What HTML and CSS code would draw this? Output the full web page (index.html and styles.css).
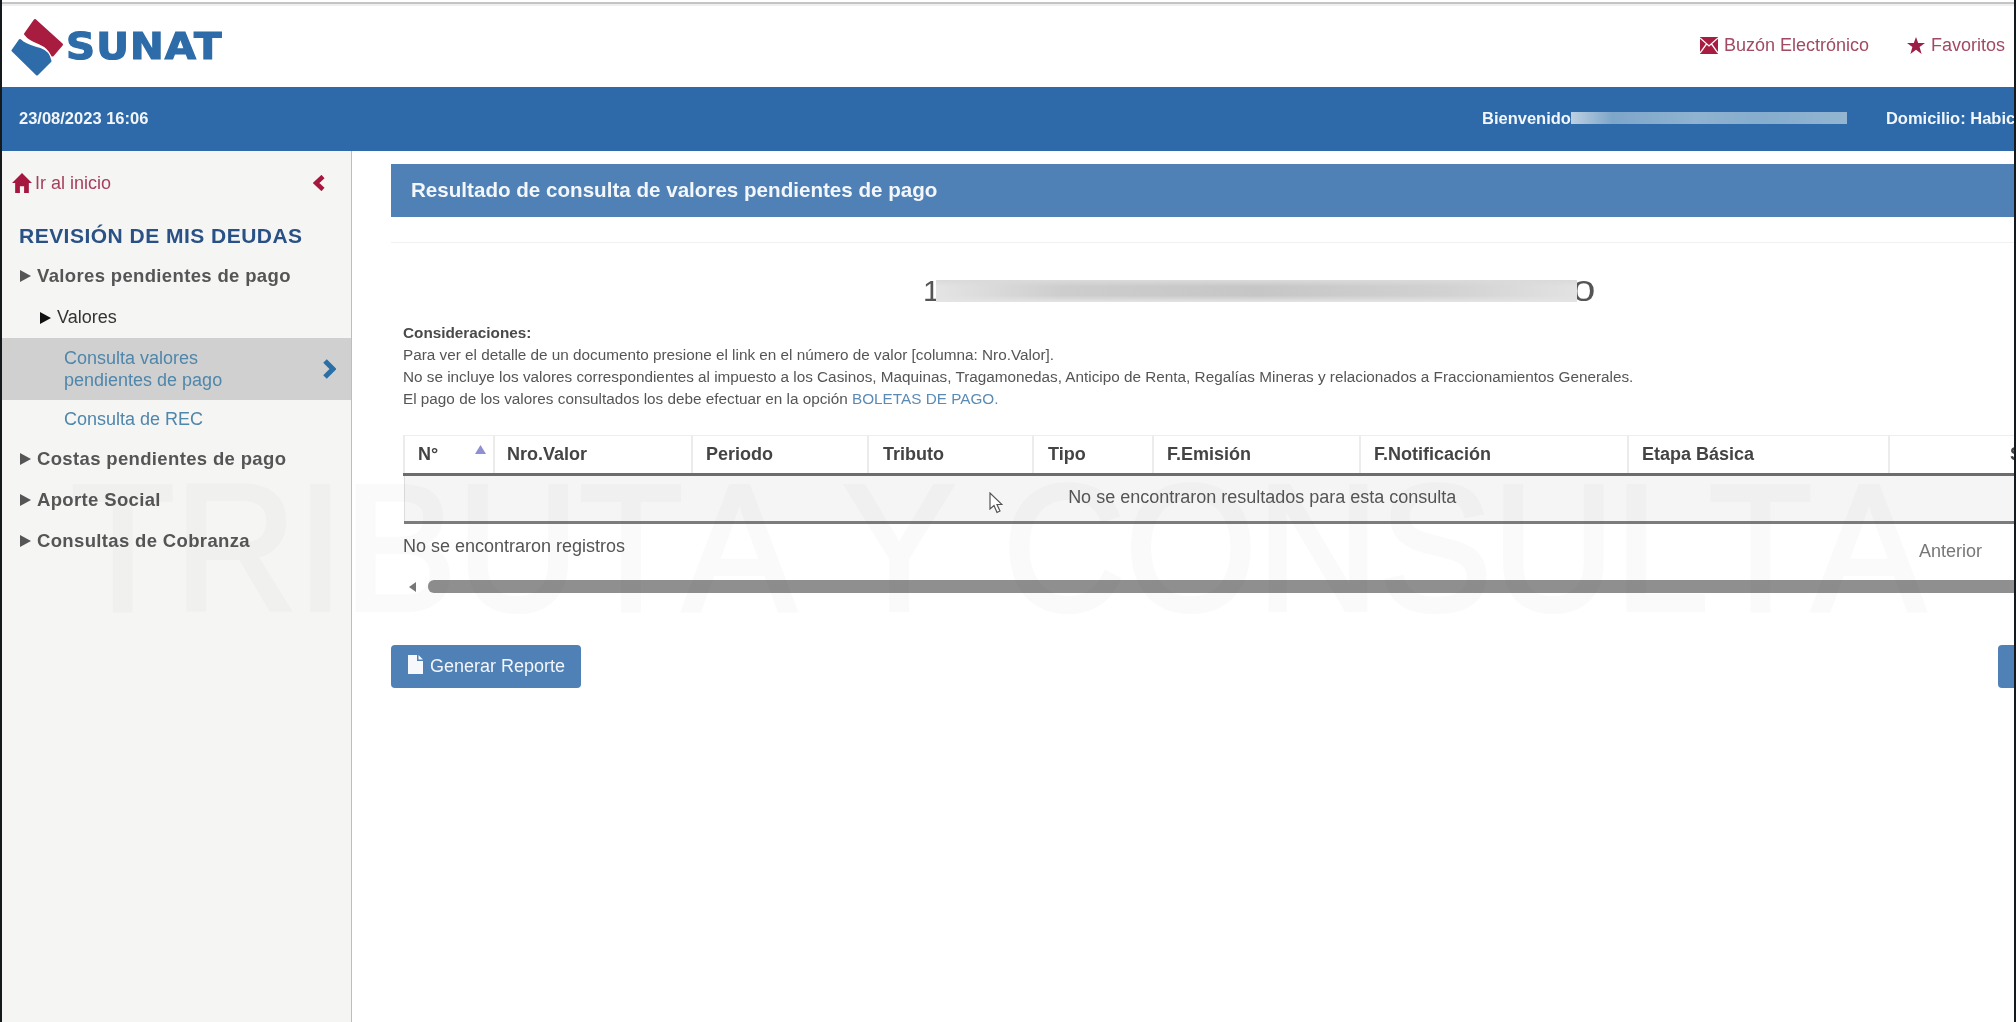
FILE: index.html
```html
<!DOCTYPE html>
<html lang="es">
<head>
<meta charset="utf-8">
<title>SUNAT</title>
<link rel="stylesheet" href="styles.css">
</head>
<body>
<div class="page">
  <div class="topstrip"></div>
  <header class="header">
    <div class="logo">
      <svg class="logo-mark" viewBox="11 17 53 58" width="53" height="58">
        <path class="logo-red" d="M35 19.500L61.500 43.500L52.500 54C50 48 47 45 40 42C34 40 29 38 25.500 33Z"/>
        <path class="logo-blue" d="M20 39.500C25 45 32 46 40 48.500C46 50.500 49 55 50 60L37 73L13 49.500Z"/>
      </svg>
      <span class="logo-text">SUNAT</span>
    </div>
    <nav class="toplinks">
      <a class="toplink">
        <svg class="ico-mail" viewBox="0 0 18 17" width="18" height="17"><path d="M0 0H18V17H0Z"/><path class="ico-cut" d="M0 1L9 9L18 1M0 16L6.500 7M18 16L11.500 7"/></svg>
        Buzón Electrónico
      </a>
      <a class="toplink">
        <svg class="ico-star" viewBox="0 0 18 17" width="18" height="17"><path d="M9 0L11.200 6H18L12.600 9.900L14.600 17L9 12.800L3.400 17L5.400 9.900L0 6H6.800Z"/></svg>
        Favoritos
      </a>
    </nav>
  </header>
  <div class="bluebar">
    <span class="datetime">23/08/2023 16:06</span>
    <div class="userinfo">
      <span>Bienvenido</span><span class="blur-name"></span>
      <span class="domicilio">Domicilio: Habic</span>
    </div>
  </div>
  <div class="body-row">
    <aside class="sidebar">
      <div class="side-top">
        <a class="home">
          <svg class="ico-red" viewBox="0 0 19 19" width="20" height="20"><path d="M9.500 0L19 9.500H16V19H11.500V12.500H7.500V19H3V9.500H0Z"/></svg>
          Ir al inicio
        </a>
        <svg class="chev-red" viewBox="0 0 12 16" width="12" height="16"><path d="M10 1.500L3 8L10 14.500"/></svg>
      </div>
      <h2 class="side-title">REVISIÓN DE MIS DEUDAS</h2>
      <ul class="menu">
        <li class="menu-main"><i class="tri"></i>Valores pendientes de pago</li>
        <li class="menu-sub"><i class="tri tri-dark"></i>Valores</li>
        <li class="menu-link active">
          <span>Consulta valores<br>pendientes de pago</span>
          <svg class="chev-blue" viewBox="0 0 14 20" width="14" height="20"><path d="M3 2L11 10L3 18"/></svg>
        </li>
        <li class="menu-link short"><span>Consulta de REC</span></li>
        <li class="menu-main first-after"><i class="tri"></i>Costas pendientes de pago</li>
        <li class="menu-main"><i class="tri"></i>Aporte Social</li>
        <li class="menu-main"><i class="tri"></i>Consultas de Cobranza</li>
      </ul>
    </aside>
    <main class="main">
      <h1 class="title-bar">Resultado de consulta de valores pendientes de pago</h1>
      <div class="rule"></div>
      <div class="ruc">
        <span>1</span><span class="ruc-blur"></span><span class="ruc-end">0</span>
      </div>
      <div class="notes">
        <strong>Consideraciones:</strong><br>
        Para ver el detalle de un documento presione el link en el número de valor [columna: Nro.Valor].<br>
        No se incluye los valores correspondientes al impuesto a los Casinos, Maquinas, Tragamonedas, Anticipo de Renta, Regalías Mineras y relacionados a Fraccionamientos Generales.<br>
        El pago de los valores consultados los debe efectuar en la opción <a class="note-link">BOLETAS DE PAGO.</a>
      </div>
      <div class="dt">
        <table class="grid">
          <thead>
            <tr>
              <th class="c1">N°<svg class="sort" viewBox="0 0 11 9" width="11" height="9"><path d="M5.500 0L11 9H0Z"/></svg></th>
              <th class="c2">Nro.Valor</th>
              <th class="c3">Periodo</th>
              <th class="c4">Tributo</th>
              <th class="c5">Tipo</th>
              <th class="c6">F.Emisión</th>
              <th class="c7">F.Notificación</th>
              <th class="c8">Etapa Básica</th>
              <th class="c9">Saldo</th>
            </tr>
          </thead>
          <tbody>
            <tr><td colspan="9">No se encontraron resultados para esta consulta</td></tr>
          </tbody>
        </table>
        <div class="pager">
          <span>No se encontraron registros</span>
          <span class="anterior">Anterior</span>
        </div>
        <div class="scrollbar">
          <i class="scroll-arrow"></i>
          <div class="scroll-thumb"></div>
        </div>
      </div>
      <div class="actions">
        <button class="btn">
          <svg class="ico-file" viewBox="0 0 15 19" width="15" height="19"><path d="M0 0H9V6H15V19H0ZM10.500 0L15 4.500H10.500Z"/></svg>
          Generar Reporte
        </button>
        <button class="btn btn-next">Regresar</button>
      </div>
    </main>
  </div>
  <div class="watermark">TRIBUTA Y CONSULTA</div>
  <svg class="cursor" viewBox="0 0 14 22" width="14" height="22"><path d="M1 1V17L5 13.500L8 20.500L11 19L8 12.500H13Z"/></svg>
</div>
</body>
</html>
```
FILE: styles.css
```css
* { box-sizing: border-box; }
html, body { margin: 0; height: 100%; overflow: hidden; background: #fff; }
body { font-family: "Liberation Sans", Arial, sans-serif; color: #555; }

.page {
  position: relative;
  width: 2016px;
  height: 1022px;
  display: flex;
  flex-direction: column;
  overflow: hidden;
  border-left: 2px solid #14191c;
  border-right: 2px solid #14191c;
  filter: blur(0.45px);
}

.topstrip { height: 6px; flex: none; background: linear-gradient(#fff 0 2px, #c4c4c4 2px 4px, #efefef 4px); }

.header {
  height: 81px;
  flex: none;
  display: flex;
  justify-content: space-between;
  align-items: center;
  padding: 0 9px 0 9px;
}
.logo { display: flex; align-items: center; }
.logo-mark { display: block; margin-top: 1px; }
.logo-red { fill: #a81c40; stroke: #a81c40; stroke-width: 3; stroke-linejoin: round; }
.logo-blue { fill: #2d6ca8; stroke: #2d6ca8; stroke-width: 3; stroke-linejoin: round; }
.logo-text {
  display: inline-block;
  font-family: "DejaVu Sans", sans-serif;
  font-weight: 700;
  font-size: 37px;
  line-height: 1;
  letter-spacing: 1px;
  color: #2d6ca8;
  margin-left: 2px;
  -webkit-text-stroke: 1.200px #2d6ca8;
  transform: scaleX(1.09);
  transform-origin: left center;
}
.toplinks { display: flex; gap: 38px; margin-top: -3px; }
.toplink { display: flex; align-items: center; gap: 6px; font-size: 18px; color: #a24a63; white-space: nowrap; }
.ico-mail path { fill: #a81c40; }
.ico-mail .ico-cut { fill: none; stroke: #fff; stroke-width: 1.300; }
.ico-star path { fill: #9d1f45; }

.bluebar {
  height: 64px;
  flex: none;
  background: #2e6aa9;
  color: #f2f6fa;
  display: flex;
  align-items: center;
  justify-content: space-between;
  padding: 0 0 2px 17px;
  font-size: 16.500px;
  font-weight: 700;
  white-space: nowrap;
  overflow: hidden;
}
.userinfo { display: flex; align-items: center; width: 532px; flex: none; }
.blur-name {
  width: 276px;
  height: 12px;
  flex: none;
  background: linear-gradient(90deg, #bcd0e2, #7ea6c9 15%, #8fb3d0 45%, #86adcd 70%, #93b5d1);
}
.domicilio { margin-left: 39px; }

.body-row { flex: 1; display: flex; min-height: 0; }

.sidebar {
  width: 350px;
  flex: none;
  background: #f5f5f4;
  border-right: 1px solid #bdbdbd;
}
.side-top {
  height: 67px;
  display: flex;
  justify-content: space-between;
  align-items: center;
  padding: 0 26px 3px 10px;
}
.home { display: flex; align-items: center; gap: 3px; font-size: 18px; color: #a5405c; }
.ico-red path { fill: #a5173e; }
.chev-red path { fill: none; stroke: #a5173e; stroke-width: 4.500; }
.side-title {
  margin: 0;
  height: 38px;
  padding-left: 17px;
  font-size: 21px;
  letter-spacing: 0.480px;
  line-height: 36px;
  font-weight: 700;
  color: #2a5185;
  white-space: nowrap;
}
.menu { list-style: none; margin: 0; padding: 0; font-size: 18px; }
.menu-main {
  height: 41px;
  display: flex;
  align-items: center;
  padding: 0 0 2px 18px;
  font-size: 18.500px;
  font-weight: 700;
  color: #555;
  letter-spacing: 0.350px;
}
.first-after { margin-top: 1px; }
.menu-sub {
  height: 41px;
  display: flex;
  align-items: center;
  padding-left: 38px;
  color: #333;
}
.tri {
  display: block;
  width: 0;
  height: 0;
  margin-right: 6px;
  border-left: 11px solid #555;
  border-top: 6.500px solid transparent;
  border-bottom: 6.500px solid transparent;
}
.tri-dark { border-left-color: #111; }
.menu-link {
  display: flex;
  justify-content: space-between;
  align-items: center;
  height: 62px;
  padding: 0 15px 0 62px;
  color: #4f86ab;
  line-height: 22px;
}
.menu-link.short { height: 38px; }
.menu-link.active { background: #d0d0d0; }
.chev-blue path { fill: none; stroke: #2a6fa5; stroke-width: 5; }

.main {
  flex: 1;
  min-width: 0;
  padding: 13px 0 0 39px;
  overflow: hidden;
}
.title-bar {
  margin: 0;
  height: 53px;
  padding-left: 20px;
  background: #4f81b6;
  color: #f4f7fa;
  font-size: 20.600px;
  line-height: 51px;
  font-weight: 700;
  white-space: nowrap;
}
.rule { height: 1px; margin-top: 25px; background: #f0f0f0; }

.ruc {
  display: flex;
  align-items: center;
  height: 24px;
  margin-top: 36px;
  padding-left: 532px;
  font-size: 30px;
  color: #555;
}
.ruc-blur {
  width: 641px;
  height: 22px;
  flex: none;
  margin-left: -4px;
  position: relative;
  z-index: 1;
  background:
    linear-gradient(#dadada, rgba(255,255,255,0) 30%, rgba(255,255,255,0) 70%, #e4e4e4),
    linear-gradient(90deg, #e4e4e4, #cdcdcd 20%, #c6c6c6 50%, #d2d2d2 80%, #e2e2e2);
}
.ruc-end {
  display: inline-block;
  margin-left: -5px;
  transform: scaleX(1.400);
  transform-origin: left center;
}

.notes {
  margin: 19px 0 0 12px;
  font-size: 15.300px;
  line-height: 22px;
  color: #555;
  white-space: nowrap;
}
.notes strong { color: #4a4a4a; }
.note-link { color: #5b8bb5; }

.dt { margin: 25px 0 0 12px; width: 1716px; }
.grid {
  width: 1716px;
  table-layout: fixed;
  border-collapse: collapse;
  font-size: 18px;
}
.grid th {
  position: relative;
  height: 39px;
  padding: 0 0 0 13px;
  text-align: left;
  font-weight: 700;
  color: #444;
  border-top: 1px solid #eee;
  border-left: 2px solid #ececec;
  border-bottom: 3px solid #6c6c6c;
  white-space: nowrap;
}
.grid td {
  height: 48px;
  padding-bottom: 3px;
  text-align: center;
  background: rgba(0,0,0,0.04);
  border-left: 1px solid #ddd;
  border-bottom: 3px solid #7c7c7c;
  color: #555;
}
.c1 { width: 90px; }
.c2 { width: 198px; }
.c3 { width: 176px; }
.c4 { width: 165px; }
.c5 { width: 120px; }
.c6 { width: 207px; }
.c7 { width: 268px; }
.c8 { width: 261px; }
.grid th.c2 { padding-left: 12px; }
.grid th.c9 { width: 231px; padding-left: 120px; }
.grid th.c4, .grid th.c5 { padding-left: 14px; }
.sort { position: absolute; right: 7px; top: 9px; }
.sort path { fill: #8f8fd2; }

.pager {
  display: flex;
  justify-content: space-between;
  font-size: 18px;
  line-height: 22px;
  margin-top: 11px;
  padding-right: 137px;
  color: #555;
}
.anterior { color: #777; margin-top: 5px; }

.scrollbar { display: flex; align-items: center; margin-top: 18px; height: 13px; padding-left: 6px; }
.scroll-arrow {
  display: block;
  width: 0;
  height: 0;
  border-right: 7px solid #777;
  border-top: 5px solid transparent;
  border-bottom: 5px solid transparent;
}
.scroll-thumb { flex: 1; height: 13px; margin-left: 12px; border-radius: 6px 0 0 6px; background: #8f8f8f; }

.actions { display: flex; justify-content: space-between; margin-top: 52px; }
.btn {
  display: flex;
  align-items: center;
  gap: 7px;
  width: 190px;
  height: 43px;
  padding: 0 0 0 17px;
  border: 0;
  border-radius: 4px;
  background: #4f81b6;
  color: #f2f5f9;
  font: 18px "Liberation Sans", Arial, sans-serif;
  white-space: nowrap;
}
.btn-next { margin-right: -174px; }
.ico-file { margin-top: -5px; }
.ico-file path { fill: #f6f8fb; }

.watermark {
  position: absolute;
  left: 69px;
  top: 452px;
  font-size: 169.400px;
  line-height: 200px;
  font-kerning: none;
  color: #fafafa;
  -webkit-text-stroke: 4px #fafafa;
  mix-blend-mode: multiply;
  white-space: nowrap;
  pointer-events: none;
  transform: scaleY(1.06);
  transform-origin: 0 158px;
}
.cursor { position: absolute; left: 987px; top: 492px; }
.cursor path { fill: #fff; stroke: #555; stroke-width: 1.200; }
```
